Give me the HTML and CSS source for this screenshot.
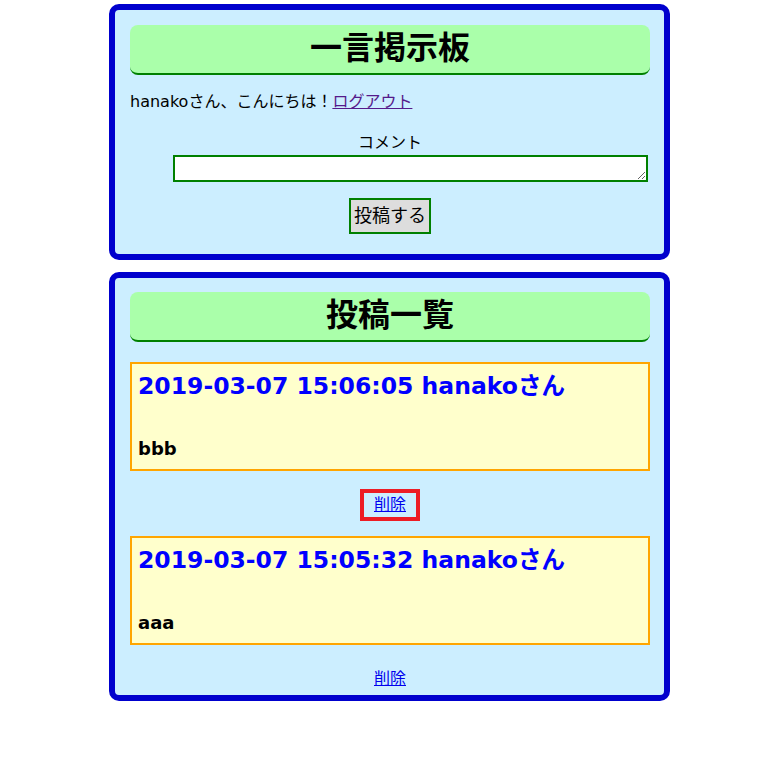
FILE: index.html
```html
<!DOCTYPE html>
<html lang="ja">
<head>
<meta charset="utf-8">
<title>一言掲示板</title>
<link rel="stylesheet" href="styles.css">
</head>
<body>
<section class="box box-form">
  <h1 class="heading">一言掲示板</h1>
  <p class="greeting">hanakoさん、こんにちは！<a class="logout" href="#">ログアウト</a></p>
  <form class="form">
    <label class="label" for="comment">コメント</label>
    <textarea id="comment" class="comment"></textarea>
    <div class="actions"><button type="button" class="submit">投稿する</button></div>
  </form>
</section>
<section class="box box-list">
  <h1 class="heading">投稿一覧</h1>
  <article class="post">
    <h2 class="post-title">2019-03-07 15:06:05 hanakoさん</h2>
    <p class="post-body">bbb</p>
  </article>
  <div class="del-row"><a class="del del-marked" href="#">削除</a></div>
  <article class="post">
    <h2 class="post-title">2019-03-07 15:05:32 hanakoさん</h2>
    <p class="post-body">aaa</p>
  </article>
  <div class="del-row"><a class="del" href="#">削除</a></div>
</section>
</body>
</html>
```
FILE: styles.css
```css
html, body {
  margin: 0;
  padding: 0;
  background: #ffffff;
}
body {
  font-family: "DejaVu Sans", "Noto Sans CJK JP", sans-serif;
  color: #000;
  padding-top: 4px;
}
.box {
  width: 520px;
  margin: 0 0 12px 109px;
  border: 6px solid #0000cd;
  border-radius: 10px;
  background: #cceeff;
  padding: 15px 14px 20px 15px;
}
.box-list {
  padding-top: 14px;
  padding-bottom: 0;
}
.heading {
  margin: 0;
  height: 40px;
  padding-bottom: 8px;
  line-height: 40px;
  background: #aaffaa;
  border-bottom: 2px solid #008000;
  border-radius: 8px;
  text-align: center;
  font-size: 32px;
  font-weight: bold;
  font-family: "Noto Sans CJK JP", sans-serif;
}
.greeting {
  margin: 15px 0 0;
  font-size: 16px;
  line-height: 24px;
}
.logout {
  color: #551a8b;
}
.form {
  margin: 16px 0 0;
}
.label {
  display: block;
  text-align: center;
  font-size: 16px;
  line-height: 22px;
  padding-bottom: 2px;
  font-family: "Noto Sans CJK JP", sans-serif;
}
.comment {
  display: block;
  box-sizing: border-box;
  margin: 1px 0 0 43px;
  width: 475px;
  height: 27px;
  border: 2px solid #008000;
  background: #fff;
  padding: 0;
}
.actions {
  margin-top: 16px;
  text-align: center;
}
.submit {
  box-sizing: border-box;
  height: 36px;
  width: 82px;
  padding: 0 0 3px;
  border: 2px solid #008000;
  background: #dddddd;
  font-size: 18px;
  line-height: 27px;
  font-family: "Noto Sans CJK JP", sans-serif;
  color: #000;
}
.post {
  margin-top: 20px;
  border: 2px solid #ffa500;
  background: #ffffcc;
  padding: 0 6px 8px;
}
.post-title {
  margin: 7px 0 0;
  font-size: 23.5px;
  line-height: 30px;
  height: 31px;
  font-weight: bold;
  color: #0000ff;
}
.post-body {
  margin: 35px 0 0;
  font-size: 18px;
  line-height: 24px;
  font-weight: bold;
}
.del-row {
  margin-top: 18px;
  height: 32px;
  display: flex;
  justify-content: center;
  align-items: center;
}
.del {
  box-sizing: border-box;
  display: flex;
  align-items: center;
  justify-content: center;
  width: 60px;
  height: 32px;
  padding-bottom: 4px;
  color: #0000ee;
  font-size: 16px;
  font-family: "Noto Sans CJK JP", sans-serif;
  border: 4px solid transparent;
}
.del-marked {
  border-color: #ed1c24;
}
.del-row + .post {
  margin-top: 15px;
}
```
